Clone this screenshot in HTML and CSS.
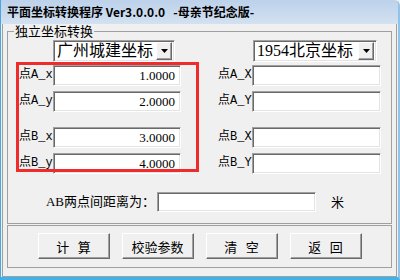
FILE: index.html
```html
<!DOCTYPE html>
<html>
<head>
<meta charset="utf-8">
<link rel="stylesheet" href="styles.css">
</head>
<body>
<div class="win">
  <div class="title">平面坐标转换程序 Ver3.0.0.0&nbsp;&nbsp;&nbsp;-母亲节纪念版-</div>
  <div class="client">
    <fieldset class="group">
      <legend class="legend">独立坐标转换</legend>
      <div class="row row-combo">
        <div class="combo combo1"><span class="combo-text">广州城建坐标</span><span class="drop"><svg width="7" height="4" viewBox="0 0 7 4"><path d="M0 0h7L3.5 4z" fill="#000"/></svg></span></div>
        <div class="combo combo2"><span class="combo-text">1954北京坐标</span><span class="drop"><svg width="7" height="4" viewBox="0 0 7 4"><path d="M0 0h7L3.5 4z" fill="#000"/></svg></span></div>
      </div>
      <div class="row r1">
        <span class="lbl">点A_x</span><div class="field left">1.0000</div>
        <span class="lbl lbl2">点A_X</span><div class="field right"></div>
      </div>
      <div class="row r2">
        <span class="lbl">点A_y</span><div class="field left">2.0000</div>
        <span class="lbl lbl2">点A_Y</span><div class="field right"></div>
      </div>
      <div class="row r3">
        <span class="lbl">点B_x</span><div class="field left">3.0000</div>
        <span class="lbl lbl2">点B_X</span><div class="field right"></div>
      </div>
      <div class="row r4">
        <span class="lbl">点B_y</span><div class="field left">4.0000</div>
        <span class="lbl lbl2">点B_Y</span><div class="field right"></div>
      </div>
      <div class="row dist">
        <span class="dlbl">AB两点间距离为：</span><div class="field dfield"></div><span class="unit">米</span>
      </div>
    </fieldset>
    <div class="btnbox">
      <div class="btn">计&nbsp;&nbsp;&nbsp;算</div>
      <div class="btn">校验参数</div>
      <div class="btn">清&nbsp;&nbsp;&nbsp;空</div>
      <div class="btn">返&nbsp;&nbsp;&nbsp;回</div>
    </div>
  </div>
  <div class="mark"></div>
</div>
</body>
</html>
```

FILE: styles.css
```css
* { box-sizing: border-box; }
html, body { margin: 0; padding: 0; }
body {
  background: #f0f0f0;
  font-family: "Liberation Serif", "Noto Sans CJK SC", serif;
  font-size: 13px;
  color: #000;
}
.win {
  position: relative;
  width: 400px;
  height: 280px;
  display: flex;
  flex-direction: column;
  background: #f0f0f0;
  border-left: 1px solid #4aa6dc;
  border-right: 2px solid #8fc3e8;
  border-bottom: 3px solid #3fb3e6;
  border-top-right-radius: 6px;
  overflow: hidden;
}
.title {
  height: 24px;
  line-height: 24px;
  padding-left: 6px;
  font-family: "Noto Sans CJK SC", sans-serif;
  font-size: 12px;
  font-weight: 700;
  white-space: nowrap;
  background: linear-gradient(#bcd1ea, #d3e1f1);
}
.client {
  flex: 1;
  margin: 0 1px 0 1px;
  border: 1px solid #a0a0a0;
  border-top: none;
  display: flex;
  flex-direction: column;
}
.group {
  margin: 0 4px;
  padding: 2px 0 11px 0;
  border: 1px solid #a0a0a0;
  min-inline-size: 0;
}
.legend {
  margin-left: 6px;
  padding: 0 1px;
  line-height: 14px;
  height: 14px;
  font-family: "Noto Sans CJK SC", sans-serif;
  font-size: 13px;
}
.row {
  display: flex;
  align-items: center;
  height: 21px;
  padding-left: 10px;
}
.row-combo { height: 22px; }
.r1 { margin-top: 3px; }
.r2 { margin-top: 5px; }
.r3 { margin-top: 15px; }
.r4 { margin-top: 5px; }
.dist { margin-top: 17px; }
.combo {
  height: 22px;
  background: #fff;
  border-top: 1px solid #a0a0a0;
  border-left: 1px solid #a0a0a0;
  border-right: 1px solid #fff;
  border-bottom: 1px solid #fff;
  box-shadow: inset 1px 1px #696969, inset -1px -1px #e3e3e3;
  display: flex;
  align-items: center;
  padding: 2px 2px 2px 3px;
}
.combo1 { width: 122px; margin-left: 35px; }
.combo2 { width: 124px; margin-left: 78px; }
.combo-text {
  flex: 1;
  font-size: 16px;
  line-height: 18px;
  white-space: nowrap;
  overflow: hidden;
}
.drop {
  width: 16px;
  height: 18px;
  background: #f0f0f0;
  border-top: 1px solid #fff;
  border-left: 1px solid #fff;
  border-right: 1px solid #696969;
  border-bottom: 1px solid #696969;
  box-shadow: inset -1px -1px #a0a0a0;
  display: flex;
  align-items: center;
  justify-content: center;
}
.lbl {
  width: 35px;
  padding-left: 1px;
  white-space: nowrap;
  line-height: 15px;
  font-family: "Liberation Mono", "Noto Sans CJK SC", monospace;
  font-size: 12px;
}
.lbl2 { margin-left: 36px; }
.field {
  height: 21px;
  background: #fff;
  border-top: 1px solid #a0a0a0;
  border-left: 1px solid #a0a0a0;
  border-right: 1px solid #fff;
  border-bottom: 1px solid #fff;
  box-shadow: inset 1px 1px #696969, inset -1px -1px #e3e3e3;
  text-align: right;
  padding-right: 5px;
  line-height: 19px;
  font-size: 13px;
}
.field.left { width: 128px; }
.field.right { width: 129px; }
.dlbl {
  width: 139px;
  text-align: right;
  white-space: nowrap;
  line-height: 15px;
  padding-right: 2px;
}
.field.dfield { width: 159px; height: 20px; }
.unit {
  margin-left: 15px;
  font-family: "Noto Sans CJK SC", sans-serif;
}
.btnbox {
  margin: 1px 4px 0 4px;
  border: 1px solid #a0a0a0;
  padding: 7px 0 8px 0;
  display: flex;
  justify-content: center;
  gap: 12px;
}
.btn {
  width: 72px;
  height: 26px;
  background: #f0f0f0;
  border-top: 1px solid #fff;
  border-left: 1px solid #fff;
  border-right: 1px solid #696969;
  border-bottom: 1px solid #696969;
  box-shadow: inset -1px -1px #a0a0a0;
  display: flex;
  align-items: center;
  justify-content: center;
  font-family: "Noto Sans CJK SC", sans-serif;
  font-size: 13px;
  white-space: nowrap;
}
.mark {
  position: absolute;
  left: 15px;
  top: 62px;
  width: 183px;
  height: 110px;
  border: 3px solid #ef2b2b;
}
```
